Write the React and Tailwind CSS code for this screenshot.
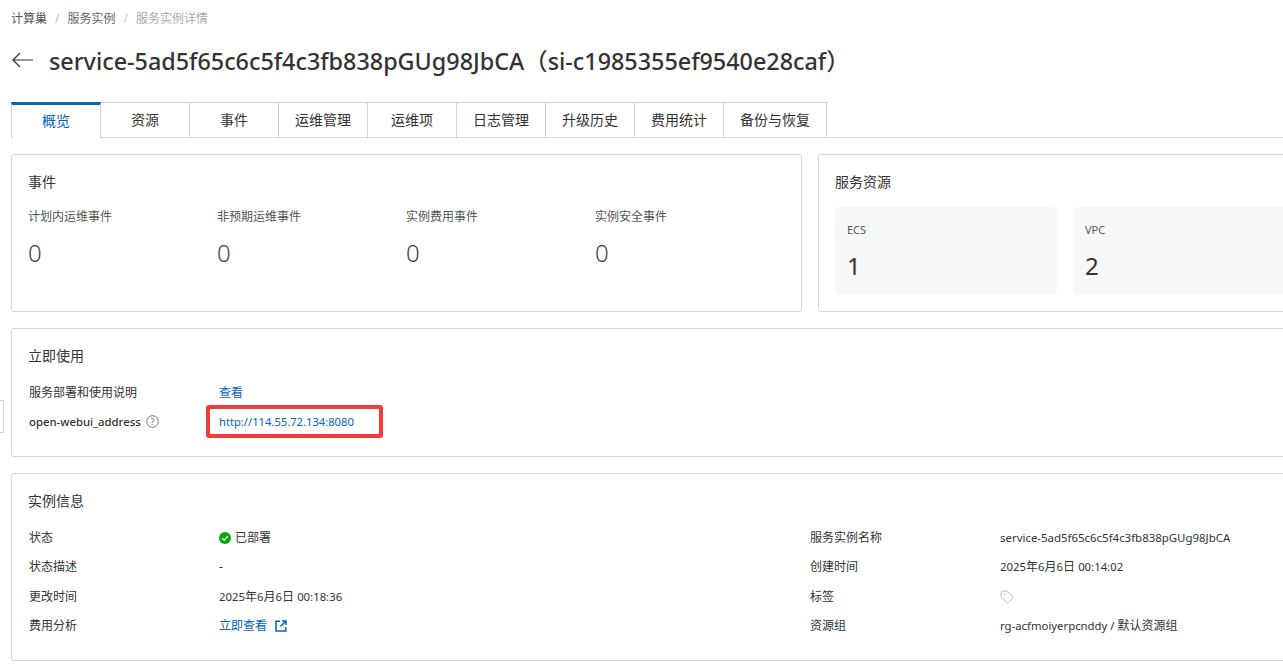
import React from 'react';
import { Tag } from 'lucide-react';

const FONT = 'font-["Noto_Sans","Noto_Sans_CJK_SC",sans-serif]';
const tabs = ['概览', '资源', '事件', '运维管理', '运维项', '日志管理', '升级历史', '费用统计', '备份与恢复'];
const events = ['计划内运维事件', '非预期运维事件', '实例费用事件', '实例安全事件'];

// latin and digits run narrower than the CJK text beside them
function L({ children }) {
  return <span className="text-[11.35px]">{children}</span>;
}

function DateTime({ time }) {
  return (
    <span>
      <L>2025</L>年<L>6</L>月<L>6</L>日 <L>{time}</L>
    </span>
  );
}

function Row({ label, children }) {
  return (
    <div className="flex items-center h-[29.5px]">
      <div className="w-[191px] shrink-0 pl-[1px] text-[#333]">{label}</div>
      <div className="text-[#333]">{children}</div>
    </div>
  );
}

function Card({ title, className = '', children }) {
  return (
    <section className={`border border-[#d5d7db] rounded-[3px] bg-white pl-[16px] ${className}`}>
      <h3 className="text-[14px] leading-[20px] text-[#333] font-normal">{title}</h3>
      {children}
    </section>
  );
}

function ResourceTile({ name, count }) {
  return (
    <div className="w-[222px] h-[88px] shrink-0 bg-[#f7f8fa] rounded-[4px] pl-[12px] pt-[14px]">
      <div className="text-[11px] leading-[18px] text-[#555]">{name}</div>
      <div className="text-[24px] leading-[30px] mt-[12px] text-[#333]">{count}</div>
    </div>
  );
}

export default function App() {
  return (
    <div className={`relative w-[1283px] h-[670px] overflow-hidden bg-white text-[12px] ${FONT}`}>
      {/* collapsed side handle */}
      <div className="absolute left-0 top-[400px] w-[4px] h-[33px] bg-white border border-l-0 border-[#d5d7db]" />

      <div className="pl-[11px]">
        <nav className="flex items-center h-[38px] text-[12px]">
          <span className="text-[#555]">计算巢</span>
          <span className="mx-[8px] text-[#bbb]">/</span>
          <span className="text-[#666]">服务实例</span>
          <span className="mx-[8px] text-[#ccc]">/</span>
          <span className="text-[#aaa]">服务实例详情</span>
        </nav>

        <div className="flex items-center h-[46px]">
          <svg width="22" height="16" viewBox="0 0 22 16" fill="none" stroke="#333" strokeWidth="1.2" className="shrink-0 ml-[1px] mb-[2px]">
            <path d="M1 8h20M8 1L1 8l7 7" />
          </svg>
          <h1 className="ml-[15px] text-[23.35px] leading-[30px] font-medium text-[#333] whitespace-nowrap">
            service-5ad5f65c6c5f4c3fb838pGUg98JbCA（si-c1985355ef9540e28caf）
          </h1>
        </div>

        <div className="flex mt-[18px] h-[36px] border-b border-[#d5d7db] w-[1272px]">
          {tabs.map((t, i) => (
            <div
              key={t}
              className={`flex items-center justify-center text-[14px] border-r border-[#cfd1d5] pb-[2px] ${
                i === 0
                  ? 'w-[90px] border-t-[3px] border-t-[#0064c8] border-l border-l-[#cfd1d5] text-[#0064c8] bg-white h-[36px]'
                  : `border-t border-t-[#cfd1d5] text-[#333] ${i === 8 ? 'w-[103px]' : 'w-[89px]'}`
              }`}
            >
              {t}
            </div>
          ))}
        </div>

        <div className="flex gap-[16px] mt-[16px]">
          <Card title="事件" className="w-[791px] h-[158px] shrink-0 pt-[17px]">
            <div className="flex mt-[16px]">
              {events.map((e) => (
                <div key={e} className="w-[189px] shrink-0">
                  <div className="text-[12px] leading-[18px] text-[#555]">{e}</div>
                  <div className="text-[24px] leading-[32px] mt-[11px] text-[#444] font-light">0</div>
                </div>
              ))}
            </div>
          </Card>
          <Card title="服务资源" className="w-[600px] h-[158px] shrink-0 pt-[17px]">
            <div className="flex gap-[16px] mt-[15px]">
              <ResourceTile name="ECS" count="1" />
              <ResourceTile name="VPC" count="2" />
            </div>
          </Card>
        </div>

        <Card title="立即使用" className="relative w-[1400px] h-[129px] mt-[16px] pt-[17px]">
          <div className="mt-[12px]">
            <div className="h-[29px]">
              <Row label="服务部署和使用说明"><span className="text-[#0064c8]">查看</span></Row>
            </div>
            <Row
              label={
                <span className="flex items-center gap-[5px] font-medium">
                  <L>open-webui_address</L>
                  <svg width="13" height="13" viewBox="0 0 13 13" fill="none" stroke="#777">
                    <circle cx="6.5" cy="6.5" r="5.8" />
                    <text x="6.5" y="9.5" fontSize="8.5" textAnchor="middle" fill="#777" stroke="none">?</text>
                  </svg>
                </span>
              }
            >
              <span className="text-[11.2px] text-[#0064c8]">http://114.55.72.134:8080</span>
            </Row>
          </div>
          {/* red annotation box */}
          <div className="absolute left-[194px] top-[76px] w-[177px] h-[33px] border-[4px] border-[#f73b3b] rounded-[3px]" />
        </Card>

        <Card title="实例信息" className="w-[1400px] h-[188px] mt-[16px] pt-[17px]">
          <div className="flex mt-[12px]">
            <div className="w-[781px] shrink-0">
              <Row label="状态">
                <span className="flex items-center gap-[4px]">
                  <svg width="12" height="12" viewBox="0 0 12 12">
                    <circle cx="6" cy="6" r="6" fill="#0aa50a" />
                    <path d="M3.2 6.2l2 1.9 3.6-3.8" fill="none" stroke="#fff" strokeWidth="1.3" />
                  </svg>
                  已部署
                </span>
              </Row>
              <Row label="状态描述">-</Row>
              <Row label="更改时间"><DateTime time="00:18:36" /></Row>
              <Row label="费用分析">
                <span className="flex items-center gap-[8px] text-[#0064c8]">
                  立即查看
                  <svg width="12" height="12" viewBox="0 0 12 12" fill="none" stroke="#0064c8" strokeWidth="1.5">
                    <path d="M5 1.2H1v9.8h9.8V7M7 1h4v4M11 1L5.5 6.5" />
                  </svg>
                </span>
              </Row>
            </div>
            <div>
              <Row label="服务实例名称"><span className="text-[11.45px]">service-5ad5f65c6c5f4c3fb838pGUg98JbCA</span></Row>
              <Row label="创建时间"><DateTime time="00:14:02" /></Row>
              <Row label="标签"><Tag size={14} strokeWidth={1.4} className="text-[#aaa]" /></Row>
              <Row label="资源组"><L>rg-acfmoiyerpcnddy / </L>默认资源组</Row>
            </div>
          </div>
        </Card>
      </div>
    </div>
  );
}
